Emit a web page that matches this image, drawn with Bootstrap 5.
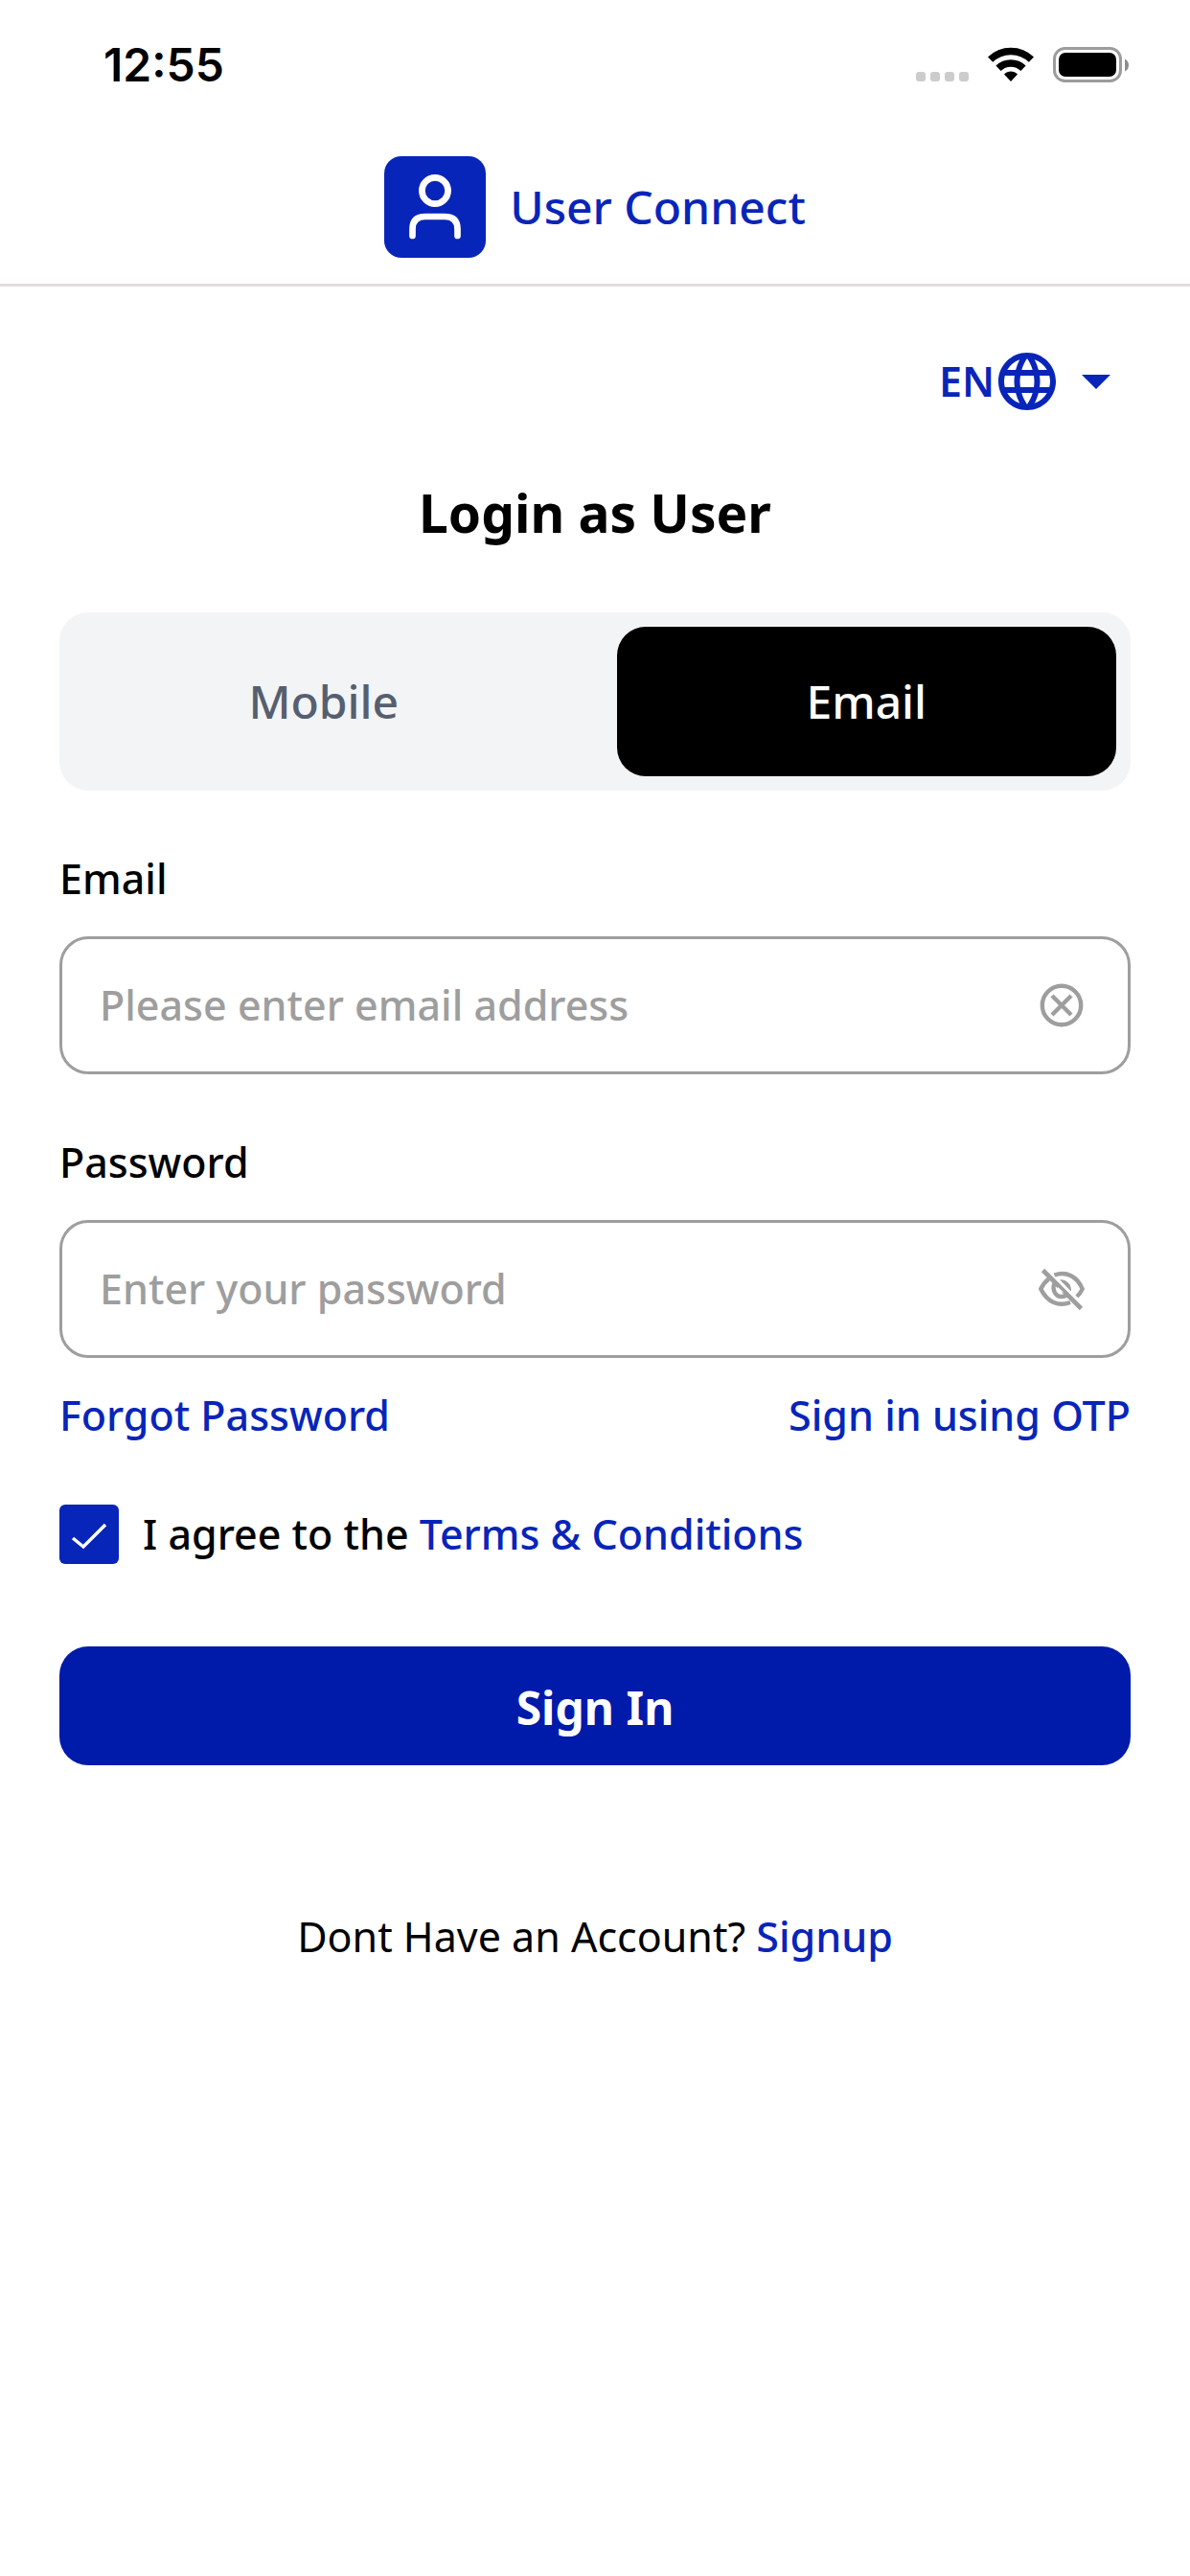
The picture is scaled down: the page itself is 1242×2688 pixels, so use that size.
<!DOCTYPE html>
<html lang="en">
<head>
<meta charset="utf-8">
<meta name="viewport" content="width=device-width, initial-scale=1">
<title>User Connect – Login</title>
<link href="https://cdn.jsdelivr.net/npm/bootstrap@5.3.0/dist/css/bootstrap.min.css" rel="stylesheet">
<style>
  :root { --brand: #0825b9; --brand-deep: #001aaa; --muted: #9e9e9e; }
  body { font-family: "Noto Sans", sans-serif; font-size: 43px; line-height: 60px; font-weight: 500; color: #000; background: #fff; }
  a, .brand-color { color: var(--brand); text-decoration: none; }
  svg { display: block; flex: none; }

  .status-bar { height: 135px; padding: 0 63px 0 108px; }
  .clock { font-family: Inter, sans-serif; font-size: 48px; font-weight: 600; }
  .status-icons { gap: 20px; }

  .brand-bar { padding: 28px 0 27px; border-bottom: 3px solid #e0dcde; }
  .brand-name { font-size: 48px; gap: 25px; }

  .page-body { padding: 69px 62px; }
  .lang { margin-right: 18px; }
  .lang select { appearance: none; border: 0; background: none; color: var(--brand); font-weight: 600; line-height: 60px; padding: 0 120px 0 0; width: 182px; }
  .lang-icons { gap: 27px; right: 3px; top: 0; height: 60px; pointer-events: none; }
  .page-title { font-size: 55px; line-height: 74px; font-weight: 700; margin: 70px 0 67px; }

  .tabs { background: #f3f4f6; border-radius: 30px; padding: 15px; gap: 45px; margin-bottom: 62px; }
  .tabs .btn { height: 156px; font-size: 48px; font-weight: 500; border: 0; border-radius: 30px; color: #565f70; }
  .tabs .btn.active { background: #000; color: #fff; }

  .form-label { margin-bottom: 30px; display: block; }
  .field { height: 144px; border: 3px solid var(--muted); border-radius: 30px; padding: 0 44px 0 39px; }
  .field .form-control { font-size: 43px; font-weight: 500; line-height: 60px; border: 0; padding: 0; background: none; box-shadow: none; color: #000; }
  .field .form-control::placeholder { color: var(--muted); opacity: 1; }
  .field .btn { border: 0; padding: 0; color: var(--muted); }
  .field-group { margin-bottom: 62px; }
  .links { margin-top: 30px; }

  .agree { gap: 25px; margin: 63px 0 86px; }
  .agree .form-check-input { width: 62px; height: 62px; margin: 0; border: 0; border-radius: 6px; flex: none; }
  .agree .form-check-input:checked { background-color: var(--brand);
    background-image: url("data:image/svg+xml,%3Csvg xmlns='http://www.w3.org/2000/svg' viewBox='0 0 62 62'%3E%3Cpath d='M14 35 25 44 48 21' fill='none' stroke='%23fff' stroke-width='3.500'/%3E%3C/svg%3E"); }
  .submit { height: 124px; border: 0; border-radius: 30px; padding: 4px 0 0; background: var(--brand-deep); color: #fff; font-size: 48px; font-weight: 700; }
  .signup { margin-top: 149px; }
</style>
</head>
<body>
<div class="status-bar d-flex align-items-center justify-content-between">
  <span class="clock">12:55</span>
  <div class="status-icons d-flex align-items-center">
    <svg width="55" height="37" viewBox="0 0 55 37" fill="#ccc" aria-hidden="true"><rect y="26" width="10" height="10" rx="3"/><rect x="15" y="26" width="10" height="10" rx="3"/><rect x="30" y="26" width="10" height="10" rx="3"/><rect x="45" y="26" width="10" height="10" rx="3"/></svg>
    <svg width="48" height="37" viewBox="0 0 48 37" aria-hidden="true"><g fill="none" stroke="#000" stroke-width="7.500"><path d="M2.600 13.200A30.500 30.500 0 0 1 45.400 13.200"/><path d="M11 22.200A18.600 18.600 0 0 1 37 22.200"/></g><path d="M24 36 17 28.500C20.500 24.500 27.500 24.500 31 28.500Z"/></svg>
    <svg width="80" height="38" viewBox="0 0 80 38" aria-hidden="true"><rect x="1.500" y="1.500" width="69" height="34" rx="11" fill="none" stroke="#9c9c9c" stroke-width="3"/><rect x="6" y="6" width="60" height="25" rx="7"/><path d="M75 12.500Q79 14.500 79 19T75 25.500Z" fill="#8c8c8c"/></svg>
  </div>
</div>

<header class="brand-bar">
  <div class="brand-name brand-color d-flex align-items-center justify-content-center">
    <svg width="106" height="106" viewBox="0 0 106 106" aria-hidden="true"><rect width="106" height="106" rx="18" fill="#0825b9"/><g fill="none" stroke="#fff" stroke-width="6.700" stroke-linecap="round"><circle cx="53" cy="36" r="13.600"/><path d="M29.500 83V76Q29.500 63 43 63H63Q76.500 63 76.500 76V83"/></g></svg>
    <span>User Connect</span>
  </div>
</header>

<main class="page-body">
  <div class="d-flex justify-content-end">
    <div class="lang position-relative">
      <select class="d-block" aria-label="Language"><option>EN</option></select>
      <div class="lang-icons position-absolute d-flex align-items-center">
        <svg width="60" height="60" viewBox="2 2 20 20" fill="#0825b9" aria-hidden="true"><path d="M11.990 2C6.470 2 2 6.480 2 12s4.470 10 9.990 10C17.520 22 22 17.520 22 12S17.520 2 11.990 2zm6.930 6h-2.950c-.320-1.250-.780-2.450-1.380-3.560 1.840.630 3.370 1.910 4.330 3.560zM12 4.040c.830 1.200 1.480 2.530 1.910 3.960h-3.820c.430-1.430 1.080-2.760 1.910-3.960zM4.260 14C4.100 13.360 4 12.690 4 12s.1-1.360.26-2h3.380c-.08.66-.14 1.320-.14 2 0 .68.060 1.340.14 2H4.260zm.82 2h2.950c.32 1.250.78 2.450 1.380 3.560-1.840-.63-3.370-1.900-4.330-3.560zm2.950-8H5.080c.96-1.660 2.490-2.930 4.330-3.560C8.810 5.550 8.350 6.750 8.030 8zM12 19.960c-.83-1.200-1.480-2.530-1.910-3.960h3.820c-.43 1.430-1.080 2.760-1.910 3.960zM14.340 14H9.660c-.09-.66-.16-1.320-.16-2 0-.68.070-1.350.16-2h4.680c.09.65.16 1.320.16 2 0 .68-.07 1.340-.16 2zm.25 5.560c.6-1.110 1.060-2.310 1.380-3.560h2.950c-.96 1.650-2.490 2.930-4.330 3.560zM16.360 14c.08-.66.14-1.320.14-2 0-.68-.06-1.340-.14-2h3.380c.16.640.26 1.310.26 2s-.1 1.360-.26 2h-3.380z"/></svg>
        <svg width="30" height="15" viewBox="0 0 30 15" fill="#0825b9" aria-hidden="true"><path d="M0 0H30L15 15Z"/></svg>
      </div>
    </div>
  </div>

  <h1 class="page-title text-center">Login as User</h1>

  <div class="tabs d-flex" role="tablist">
    <button type="button" class="btn flex-fill w-50" role="tab" aria-selected="false">Mobile</button>
    <button type="button" class="btn active flex-fill w-50" role="tab" aria-selected="true">Email</button>
  </div>

  <form>
    <div class="field-group">
      <label class="form-label" for="email">Email</label>
      <div class="field d-flex align-items-center">
        <input type="email" class="form-control" id="email" placeholder="Please enter email address">
        <button type="button" class="btn" aria-label="Clear email"><svg width="50" height="50" viewBox="0 0 50 50" fill="none" stroke="currentColor" stroke-width="4.400"><circle cx="25" cy="25" r="20.200"/><path d="M15 15 35 35M35 15 15 35"/></svg></button>
      </div>
    </div>

    <div>
      <label class="form-label" for="password">Password</label>
      <div class="field d-flex align-items-center">
        <input type="password" class="form-control" id="password" placeholder="Enter your password">
        <button type="button" class="btn" aria-label="Show password"><svg width="50" height="50" viewBox="0 0 50 50" fill="none" stroke="currentColor" stroke-width="4.400"><path d="M5.500 5.500 45.500 45.500" stroke-width="4.600"/><path d="M11.500 14.500Q6 19 3.300 25C10 39 22 43.500 34 39"/><path d="M17.500 10.500C30 6 41.500 12 46.700 25Q45 29 41 33"/><path d="M17.500 19C14.500 26 19 33.500 25.500 33Q29 33 31.500 31"/><path d="M23 15.200C30 14.500 36 20.500 34.800 27.500Z" fill="currentColor" stroke="none"/><path d="M21 23C20.500 27 23 29 27 28.500Z" fill="#fff" stroke="none"/></svg></button>
      </div>
    </div>

    <div class="links d-flex justify-content-between">
      <a href="#">Forgot Password</a>
      <a href="#">Sign in using OTP</a>
    </div>

    <div class="agree d-flex align-items-center">
      <input class="form-check-input" type="checkbox" id="agree" checked>
      <label for="agree">I agree to the <a href="#">Terms &amp; Conditions</a></label>
    </div>

    <button type="submit" class="submit btn w-100">Sign In</button>
  </form>

  <p class="signup text-center mb-0"><span class="fw-normal">Dont Have an Account?</span> <a href="#">Signup</a></p>
</main>
<script src="https://cdn.jsdelivr.net/npm/bootstrap@5.3.0/dist/js/bootstrap.bundle.min.js"></script>
</body>
</html>
